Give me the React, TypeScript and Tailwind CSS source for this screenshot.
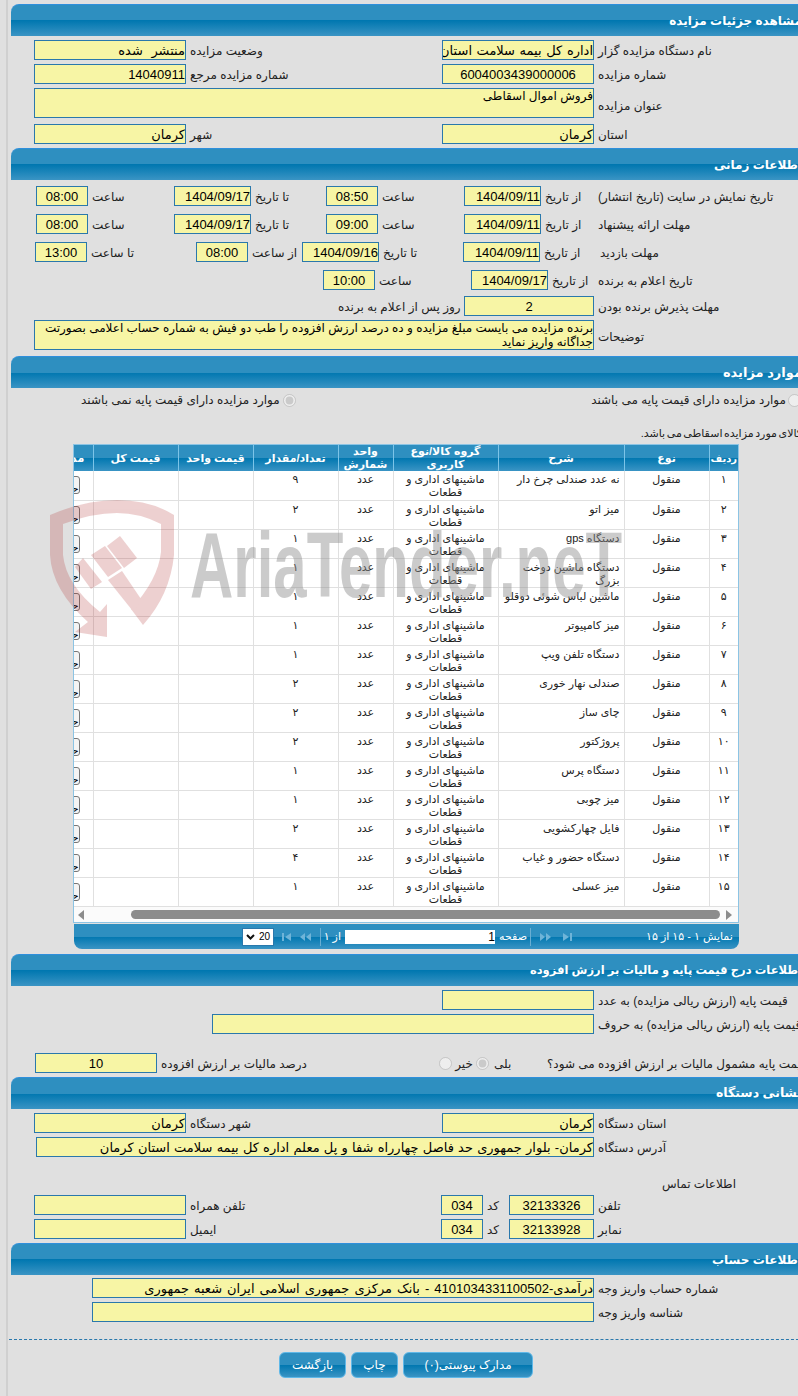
import type { ReactNode } from 'react';

const items = [
  ['۱', 'نه عدد صندلی چرخ دار', '۹'],
  ['۲', 'میز اتو', '۲'],
  ['۳', 'دستگاه gps', '۱'],
  ['۴', 'دستگاه ماشین دوخت بزرگ', '۱'],
  ['۵', 'ماشین لباس شوئی دوقلو', '۱'],
  ['۶', 'میز کامپیوتر', '۱'],
  ['۷', 'دستگاه تلفن ویپ', '۱'],
  ['۸', 'صندلی نهار خوری', '۲'],
  ['۹', 'چای ساز', '۲'],
  ['۱۰', 'پروژکتور', '۲'],
  ['۱۱', 'دستگاه پرس', '۱'],
  ['۱۲', 'میز چوبی', '۱'],
  ['۱۳', 'فایل چهارکشویی', '۲'],
  ['۱۴', 'دستگاه حضور و غیاب', '۴'],
  ['۱۵', 'میز عسلی', '۱'],
];

const gradient = 'bg-[linear-gradient(#2e8fc0_0%,#2e8fc0_50%,#0077b0_50%,#3a94c4_100%)]';

function Header({ title, size = 'text-[12px]' }: { title: string; size?: string }) {
  return (
    <div
      dir="rtl"
      className={`h-8 border-t border-[#2f8fdc] rounded-tl-lg ${gradient} pr-[14px] flex items-center ${size} font-bold text-white whitespace-nowrap`}
    >
      {title}
    </div>
  );
}

function In({ value = '', className = '' }: { value?: string; className?: string }) {
  return (
    <input
      dir="rtl"
      readOnly
      value={value}
      className={`h-5 flex-none border border-[#2a78ac] bg-[#f7f5a5] text-[13px] text-black outline-none ${className}`}
    />
  );
}

function L({ children, className = '', flush = false }: { children?: ReactNode; className?: string; flush?: boolean }) {
  return (
    <span
      dir="rtl"
      className={`flex-none whitespace-nowrap text-left text-[12px] text-[#222] pt-[2px] ${flush ? '' : 'pl-1'} ${className}`}
    >
      {children}
    </span>
  );
}

function Row({ children, className = '' }: { children: ReactNode; className?: string }) {
  return <div className={`flex items-center h-5 ${className}`}>{children}</div>;
}

function PagerIcon({ flip = false, bar = false }: { flip?: boolean; bar?: boolean }) {
  return (
    <svg width="12" height="8" viewBox="0 0 12 8" className={flip ? 'rotate-180' : ''} fill="#6fb4d8">
      {bar ? (
        <>
          <path d="M0 0h2v8H0z" />
          <path d="M3 4l6-4v8z" />
        </>
      ) : (
        <>
          <path d="M0 4l5-4v8z" />
          <path d="M6 4l5-4v8z" />
        </>
      )}
    </svg>
  );
}

function ItemsTable() {
  const th = 'border-l border-[#7cc4e8] font-bold text-white text-[11px] leading-[13px] text-center align-middle p-0';
  const cell = 'border-l border-b border-[#e0e0e0]';
  const td = `${cell} align-top text-center pt-[2px] text-[11px] leading-[13px] text-[#222]`;
  return (
    <div className="ml-[62px] w-[666px] h-[479px] border border-[#8cc4e4] bg-white">
      <div dir="rtl" className="w-full h-[462px] overflow-hidden">
        <table className="table-fixed border-collapse w-[697px]">
          <colgroup>
            <col className="w-[29px]" />
            <col className="w-[85px]" />
            <col className="w-[126px]" />
            <col className="w-[105px]" />
            <col className="w-[55px]" />
            <col className="w-[85px]" />
            <col className="w-[75px]" />
            <col className="w-[85px]" />
            <col className="w-[52px]" />
          </colgroup>
          <thead>
            <tr className={`h-[26px] ${gradient}`}>
              <th className="border-l border-[#7cc4e8] font-bold text-white text-[10px] text-center align-middle p-0 whitespace-nowrap">ردیف</th>
              <th className={th}>نوع</th>
              <th className={th}>شرح</th>
              <th className={th}>گروه کالا/نوع کاربری</th>
              <th className={th}>واحد شمارش</th>
              <th className={th}>تعداد/مقدار</th>
              <th className={th}>قیمت واحد</th>
              <th className={th}>قیمت کل</th>
              <th className={th}>مدارک</th>
            </tr>
          </thead>
          <tbody>
            {items.map(([no, desc, qty]) => (
              <tr key={no} className="h-[29px]">
                <td className={td}>{no}</td>
                <td className={td}>منقول</td>
                <td className={`${cell} align-top text-right pt-[2px] pr-1 text-[11px] leading-[13px] text-[#222]`}>{desc}</td>
                <td className={td}>ماشینهای اداری و قطعات</td>
                <td className={td}>عدد</td>
                <td className={td}>{qty}</td>
                <td className={td} />
                <td className={td} />
                <td className={`${cell} align-middle`}>
                  <div className="mr-[13px] w-[50px] h-[18px] border border-[#777] rounded-[3px] bg-[#f4f4f4] text-[11px] leading-[22px] text-right text-black overflow-hidden whitespace-nowrap">
                    جزئیات
                  </div>
                </td>
              </tr>
            ))}
          </tbody>
        </table>
      </div>
      <div className="flex items-center h-[15px] bg-[#fbfbfb] px-[3px]">
        <span className="w-0 h-0 border-y-[5px] border-y-transparent border-r-[6px] border-r-[#8c8c8c] ml-[1px]" />
        <span className="ml-[47px] w-[589px] h-[9px] rounded-full bg-[#8c8c8c]" />
        <span className="ml-[6px] w-0 h-0 border-y-[5px] border-y-transparent border-l-[6px] border-l-[#8c8c8c]" />
      </div>
    </div>
  );
}

function Pager() {
  return (
    <div className={`ml-[63px] mt-[1px] w-[665px] h-[25px] rounded-b-lg ${gradient} flex items-center text-[11px] text-white`}>
      <div className="ml-[168px] flex items-center justify-between w-[32px] h-[18px] bg-white border border-[#2a78ac] px-[3px] text-[10px] text-black">
        <svg width="9" height="6" viewBox="0 0 9 6" fill="none" stroke="#111" strokeWidth="2">
          <path d="M1 1l3.5 3.5L8 1" />
        </svg>
        <span className="font-['Liberation_Sans']">20</span>
      </div>
      <div className="ml-[8px]"><PagerIcon bar /></div>
      <div className="ml-[6px]"><PagerIcon /></div>
      <span className="ml-[8px] w-px h-[18px] bg-[#6aaed2]" />
      <span dir="rtl" className="ml-[4px] w-[16px] whitespace-nowrap">از ۱</span>
      <input
        dir="ltr"
        readOnly
        value="1"
        className="ml-[4px] w-[150px] h-[14px] bg-white text-right text-[12px] leading-[14px] text-black outline-none font-['Liberation_Sans']"
      />
      <span dir="rtl" className="ml-[4px] w-[28px] whitespace-nowrap">صفحه</span>
      <span className="ml-[3px] w-px h-[18px] bg-[#6aaed2]" />
      <div className="ml-[8px]"><PagerIcon flip /></div>
      <div className="ml-[9px]"><PagerIcon flip bar /></div>
      <span dir="rtl" className="ml-[74px] whitespace-nowrap">نمایش ۱ - ۱۵ از ۱۵</span>
    </div>
  );
}

function Watermark() {
  return (
    <div className="absolute left-0 top-0 w-[798px] h-[700px] pointer-events-none overflow-hidden">
      <svg width="798" height="700" viewBox="0 0 798 700" className="absolute left-0 top-0">
        <g fill="#b02c2c" opacity="0.22">
          <path d="M50 515Q85 500 117 500Q150 500 174 515L174 555Q170 595 143 625L131 609Q158 580 161 552L161 524Q140 513 117 513Q92 513 63 524L63 555Q66 585 100 612L107 604L107 637L75 632L88 622Q52 590 50 555Z" />
          <path d="M107 546L120 536L137 558L124 568Z" />
          <path d="M91 555L105 546L122 568L108 577Z" />
          <path d="M75 567L83 558L102 582L91 589Z" />
          <path d="M108 580L122 571L143 602L132 610Z" />
        </g>
      </svg>
      <span className="absolute left-[190px] top-[512px] origin-left scale-x-[0.645] text-[93px] leading-[107px] font-bold whitespace-nowrap text-[#8e8e8e] opacity-45 font-['Liberation_Sans']">
        AriaTender.neT
      </span>
    </div>
  );
}

export default function App() {
  return (
    <div className="relative w-[798px] h-[1396px] overflow-hidden bg-[#e0e0e0] font-['Liberation_Sans','DejaVu_Sans',sans-serif]">
      <div className="ml-[6px] w-[810px] h-[1396px] border-l-2 border-[#d0d0d0] pl-[3px] pt-1">
        <Header title="مشاهده جزئیات مزایده" />
        <Row className="mt-1 pl-[23px]">
          <In value="منتشر شده" className="w-[152px] [word-spacing:5px]" />
          <L className="w-[256px]">وضعیت مزایده</L>
          <In value="اداره کل بیمه سلامت استان کرمان" className="w-[152px] [word-spacing:1px]" />
          <L className="w-[220px]">نام دستگاه مزایده گزار</L>
        </Row>
        <Row className="mt-1 pl-[23px]">
          <In value="14040911" className="w-[152px]" />
          <L className="w-[256px]">شماره مزایده مرجع</L>
          <In value="6004003439000006" className="w-[152px] text-center" />
          <L className="w-[220px]">شماره مزایده</L>
        </Row>
        <div className="flex items-center mt-1 pl-[23px] h-[30px]">
          <textarea
            dir="rtl"
            readOnly
            value="فروش اموال اسقاطی"
            className="w-[560px] h-[30px] flex-none resize-none overflow-hidden border border-[#2a78ac] bg-[#f7f5a5] text-[12px] leading-[14px] text-black outline-none"
          />
          <L className="w-[220px] mt-[4px]">عنوان مزایده</L>
        </div>
        <Row className="mt-[6px] pl-[23px]">
          <In value="کرمان" className="w-[152px]" />
          <L className="w-[256px]">شهر</L>
          <In value="کرمان" className="w-[152px]" />
          <L className="w-[220px]">استان</L>
        </Row>

        <div className="mt-1"><Header title="اطلاعات زمانی" /></div>
        <Row className="mt-[6px] pl-[25px]">
          <In value="08:00" className="w-[52px] text-center" />
          <L className="w-[86px]">ساعت</L>
          <In value="1404/09/17" className="w-[77px]" />
          <L className="w-[75px]">تا تاریخ</L>
          <In value="08:50" className="w-[52px] text-center" />
          <L className="w-[86px]">ساعت</L>
          <In value="1404/09/11" className="w-[77px]" />
          <L className="w-[57px]">از تاریخ</L>
          <L flush className="w-[220px]">تاریخ نمایش در سایت (تاریخ انتشار)</L>
        </Row>
        <Row className="mt-2 pl-[25px]">
          <In value="08:00" className="w-[52px] text-center" />
          <L className="w-[86px]">ساعت</L>
          <In value="1404/09/17" className="w-[77px]" />
          <L className="w-[75px]">تا تاریخ</L>
          <In value="09:00" className="w-[52px] text-center" />
          <L className="w-[86px]">ساعت</L>
          <In value="1404/09/11" className="w-[77px]" />
          <L className="w-[57px]">از تاریخ</L>
          <L flush className="w-[220px]">مهلت ارائه پیشنهاد</L>
        </Row>
        <Row className="mt-2 pl-[24px]">
          <In value="13:00" className="w-[52px] text-center" />
          <L className="w-[109px]">تا ساعت</L>
          <In value="08:00" className="w-[52px] text-center" />
          <L className="w-[54px]">از ساعت</L>
          <In value="1404/09/16" className="w-[77px]" />
          <L className="w-[84px]">تا تاریخ</L>
          <In value="1404/09/11" className="w-[77px]" />
          <L className="w-[58px]">از تاریخ</L>
          <L flush className="w-[220px] pl-[2px]">مهلت بازدید</L>
        </Row>
        <Row className="mt-2 pl-[312px]">
          <In value="10:00" className="w-[52px] text-center" />
          <L className="w-[96px]">ساعت</L>
          <In value="1404/09/17" className="w-[77px]" />
          <L className="w-[50px]">از تاریخ</L>
          <L flush className="w-[220px]">تاریخ اعلام به برنده</L>
        </Row>
        <Row className="mt-[6px] pl-[327px]">
          <L flush className="w-[126px]">روز پس از اعلام به برنده</L>
          <In value="2" className="w-[130px] text-center" />
          <L className="w-[220px]">مهلت پذیرش برنده بودن</L>
        </Row>
        <div className="flex items-center mt-1 pl-[23px] h-[30px]">
          <textarea
            dir="rtl"
            readOnly
            value="برنده مزایده می بایست مبلغ مزایده و ده درصد ارزش افزوده را طب دو فیش به شماره حساب اعلامی بصورتت جداگانه واریز نماید"
            className="w-[560px] h-[30px] flex-none resize-none overflow-hidden border border-[#2a78ac] bg-[#f7f5a5] text-[12px] leading-[14px] text-black outline-none"
          />
          <L className="w-[220px] mt-[2px]">توضیحات</L>
        </div>

        <div className="mt-[6px]"><Header title="موارد مزایده" size="text-[13px]" /></div>
        <div className="flex items-center h-4 mt-1 pl-[70px]">
          <span dir="rtl" className="flex-none w-[202px] text-left text-[12px] text-[#222] whitespace-nowrap">
            موارد مزایده دارای قیمت پایه نمی باشند
          </span>
          <input type="radio" disabled checked readOnly className="flex-none m-0 w-[13px] h-[13px]" />
          <span dir="rtl" className="flex-none w-[492px] pr-[2px] text-[12px] text-[#222] whitespace-nowrap">
            موارد مزایده دارای قیمت پایه می باشند
          </span>
          <input type="radio" disabled className="flex-none m-0 w-[13px] h-[13px]" />
        </div>
        <div dir="rtl" className="mt-[17px] h-4 pr-[14px] flex items-center text-[11px] [word-spacing:-1.5px] text-[#222] whitespace-nowrap">
          کالای مورد مزایده اسقاطی می باشد.
        </div>
        <div className="mt-[3px]"><ItemsTable /></div>
        <Pager />

        <div className="mt-[5px]"><Header title="اطلاعات درج قیمت پایه و مالیات بر ارزش افزوده" size="text-[11.5px]" /></div>
        <Row className="mt-1 pl-[431px]">
          <In className="w-[152px]" />
          <L className="w-[220px]">قیمت پایه (ارزش ریالی مزایده) به عدد</L>
        </Row>
        <Row className="mt-1 pl-[201px]">
          <In className="w-[382px]" />
          <L className="w-[220px]">قیمت پایه (ارزش ریالی مزایده) به حروف</L>
        </Row>
        <Row className="mt-[19px] pl-[24px]">
          <In value="10" className="w-[122px] text-center" />
          <L className="w-[282px]">درصد مالیات بر ارزش افزوده</L>
          <input type="radio" disabled className="flex-none m-0 w-[13px] h-[13px]" />
          <span dir="rtl" className="flex-none w-[24px] pt-[2px] text-center text-[12px] text-[#222]">خیر</span>
          <input type="radio" disabled checked readOnly className="flex-none m-0 w-[13px] h-[13px]" />
          <L flush className="w-[58px] pl-[5px]">بلی</L>
          <L flush className="w-[280px]">قیمت پایه مشمول مالیات بر ارزش افزوده می شود؟</L>
        </Row>

        <div className="mt-1"><Header title="نشانی دستگاه" size="text-[12.5px]" /></div>
        <Row className="mt-1 pl-[23px]">
          <In value="کرمان" className="w-[152px]" />
          <L className="w-[256px]">شهر دستگاه</L>
          <In value="کرمان" className="w-[152px]" />
          <L className="w-[220px]">استان دستگاه</L>
        </Row>
        <Row className="mt-1 pl-[25px]">
          <In value="کرمان- بلوار جمهوری حد فاصل چهارراه شفا و پل معلم اداره کل بیمه سلامت استان کرمان" className="w-[558px] [word-spacing:0.6px]" />
          <L className="w-[220px]">آدرس دستگاه</L>
        </Row>
        <div dir="rtl" className="mt-[19px] h-4 pr-[80px] flex items-center text-[12px] text-[#222]">اطلاعات تماس</div>
        <Row className="mt-[3px] pl-[23px]">
          <In className="w-[152px]" />
          <L className="w-[255px]">تلفن همراه</L>
          <In value="034" className="w-[42px] text-center" />
          <L className="w-[26px]">کد</L>
          <In value="32133326" className="w-[85px] text-center" />
          <L className="w-[220px]">تلفن</L>
        </Row>
        <Row className="mt-1 pl-[23px]">
          <In className="w-[152px]" />
          <L className="w-[255px]">ایمیل</L>
          <In value="034" className="w-[42px] text-center" />
          <L className="w-[26px]">کد</L>
          <In value="32133928" className="w-[85px] text-center" />
          <L className="w-[220px]">نمابر</L>
        </Row>

        <div className="mt-1"><Header title="اطلاعات حساب" /></div>
        <Row className="mt-[3px] pl-[81px]">
          <In value="درآمدی-4101034331100502 - بانک مرکزی جمهوری اسلامی ایران شعبه جمهوری" className="w-[502px] [word-spacing:1.4px]" />
          <L className="w-[220px]">شماره حساب واریز وجه</L>
        </Row>
        <Row className="mt-1 pl-[81px]">
          <In className="w-[502px]" />
          <L className="w-[220px]">شناسه واریز وجه</L>
        </Row>
        <div className="mt-[17px] -ml-[2px] w-[800px] border-t border-dashed border-[#2a78ac]" />
        <div className="mt-3 flex gap-[5px] pl-[268px]">
          {[
            ['بازگشت', 'w-[67px]'],
            ['چاپ', 'w-[47px]'],
            ['مدارک پیوستی(۰)', 'w-[130px]'],
          ].map(([text, width]) => (
            <button
              key={text}
              dir="rtl"
              className={`${width} h-[26px] rounded-md border border-[#5fb8e8] ${gradient} text-[12px] text-white`}
            >
              {text}
            </button>
          ))}
        </div>
      </div>
      <Watermark />
    </div>
  );
}
